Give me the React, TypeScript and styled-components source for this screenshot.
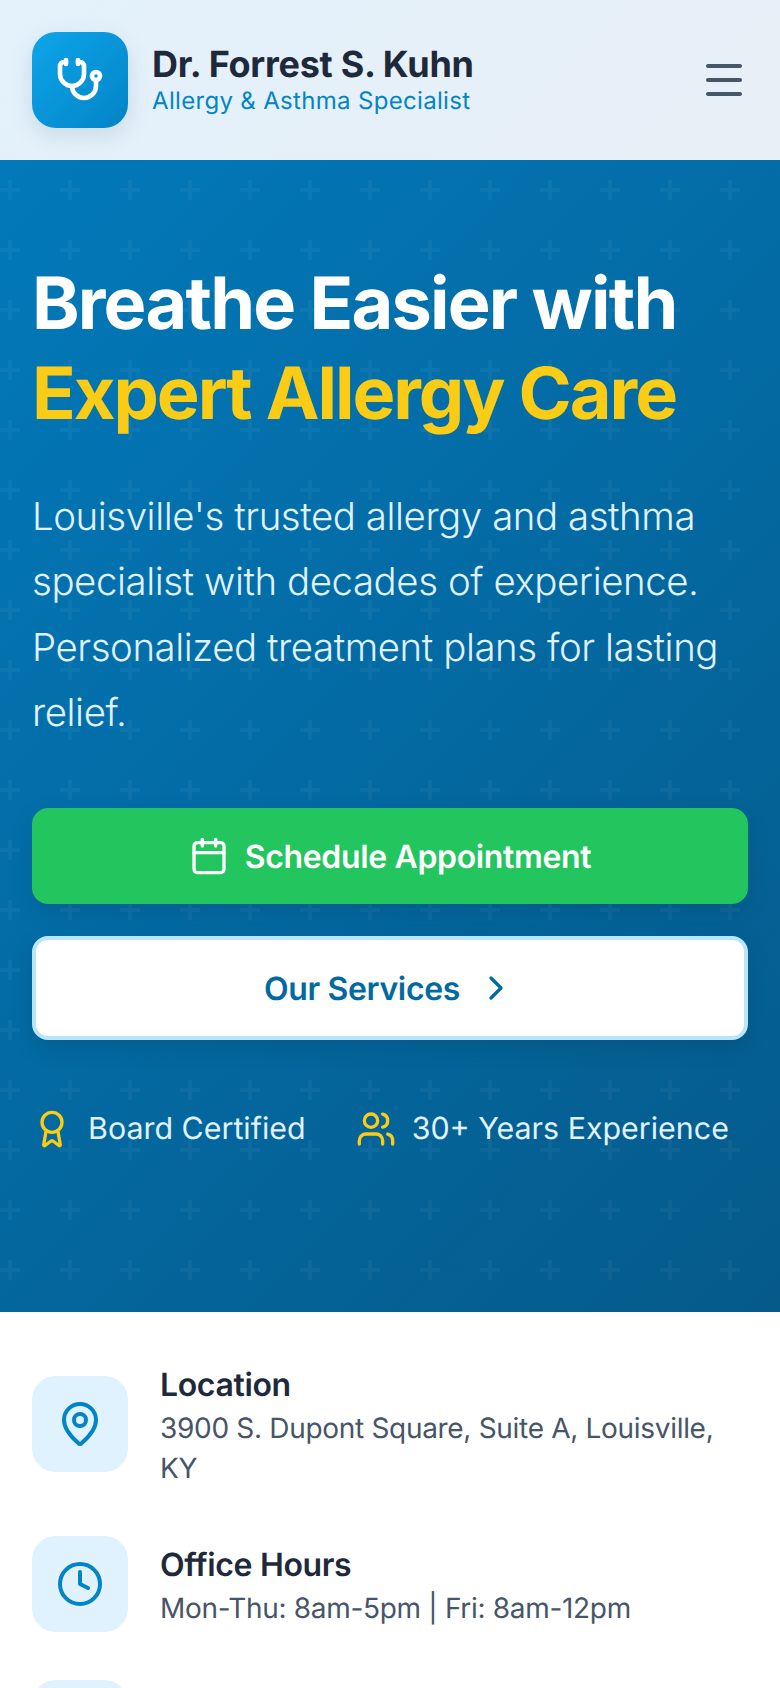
import React from "react";
import styled, { createGlobalStyle } from "styled-components";
import { Award, Calendar, ChevronRight, Clock, MapPin, Phone, Stethoscope, Users } from "lucide-react";

const Global = createGlobalStyle`
  html, body { margin: 0; padding: 0; background: #fff; }
  * { box-sizing: border-box; letter-spacing: -0.011em; }
  body { font-family: Inter, "Noto Sans", sans-serif; text-rendering: geometricPrecision; }
`;

const Page = styled.div`
  width: 780px;
  height: 1688px;
  overflow: hidden;
  background: #fff;
`;

const Header = styled.header`
  height: 160px;
  padding: 0 32px;
  display: flex;
  align-items: center;
  justify-content: space-between;
  background: linear-gradient(135deg, #e3f2fb 0%, #e8eff7 100%);
`;

const Brand = styled.div`
  display: flex;
  align-items: center;
  gap: 24px;
`;

const Logo = styled.div`
  width: 96px;
  height: 96px;
  border-radius: 24px;
  display: flex;
  align-items: center;
  justify-content: center;
  color: #fff;
  background: linear-gradient(135deg, #0ea5e9 0%, #0284c7 100%);
  box-shadow: 0 8px 24px rgba(2, 60, 100, 0.12);
`;

const BrandText = styled.div`
  display: flex;
  flex-direction: column;
`;

const Name = styled.div`
  font-size: 36px;
  line-height: 42px;
  font-weight: 700;
  letter-spacing: -0.28px;
  color: #1e293b;
`;

const Tagline = styled.div`
  font-size: 24px;
  line-height: 32px;
  font-weight: 400;
  letter-spacing: 0.32px;
  color: #0284c7;
`;

const MenuButton = styled.div`
  width: 36px;
  margin-right: 6px;
  display: flex;
  flex-direction: column;
  gap: 10px;
`;

const MenuBar = styled.span`
  display: block;
  height: 4px;
  border-radius: 2px;
  background: #475569;
`;

const plusTile = encodeURIComponent(
  '<svg xmlns="http://www.w3.org/2000/svg" width="60" height="60"><path fill="#fff" fill-opacity="0.04" d="M8 20h4v8h8v4h-8v8H8v-8H0v-4h8z"/></svg>'
);

const Hero = styled.section`
  padding: 99px 32px 159px;
  color: #fff;
  background-color: #0369a1;
  background-image:
    url("data:image/svg+xml,${plusTile}"),
    linear-gradient(135deg, #0279ba 0%, #055a8a 100%);
  background-size: 60px 60px, 100% 100%;
`;

const Title = styled.h1`
  margin: 0;
  font-size: 72px;
  line-height: 90px;
  font-weight: 700;
  letter-spacing: -0.025em;
`;

const Accent = styled.span`
  display: block;
  color: #facc15;
  letter-spacing: -2.03px;
`;

const Lead = styled.p`
  margin: 46px 0 0;
  font-size: 38.4px;
  line-height: 65.28px;
  font-weight: 300;
  color: #e0f2fe;
`;

const Actions = styled.div`
  margin-top: 62px;
  display: flex;
  flex-direction: column;
  gap: 32px;
`;

const ActionBase = styled.div`
  border-radius: 16px;
  display: flex;
  align-items: center;
  justify-content: center;
  gap: 16px;
  font-size: 32px;
  font-weight: 600;
  box-shadow: 0 8px 24px rgba(0, 0, 0, 0.1);
`;

const PrimaryButton = styled(ActionBase)`
  height: 96px;
  background: #22c55e;
  color: #fff;
`;

const SecondaryButton = styled(ActionBase)`
  height: 104px;
  border: 4px solid #bae6fd;
  background: #fff;
  color: #0369a1;
`;

const Badges = styled.div`
  margin-top: 65px;
  display: flex;
  gap: 50px;
`;

const Badge = styled.div`
  display: flex;
  align-items: center;
  gap: 16px;
  font-size: 30.4px;
  line-height: 48px;
  letter-spacing: 0;
  white-space: nowrap;
  color: #e0f2fe;
  svg { color: #facc15; flex: none; }
`;

const Info = styled.section`
  padding: 48px 32px 0;
  display: flex;
  flex-direction: column;
  gap: 48px;
`;

const InfoRow = styled.div`
  display: flex;
  align-items: center;
  gap: 32px;
`;

const InfoIcon = styled.div`
  width: 96px;
  height: 96px;
  flex: none;
  border-radius: 24px;
  display: flex;
  align-items: center;
  justify-content: center;
  background: #e0f2fe;
  color: #0284c7;
`;

const InfoText = styled.div`
  display: flex;
  flex-direction: column;
`;

const InfoTitle = styled.div`
  font-size: 32px;
  line-height: 50px;
  margin-bottom: -2px;
  font-weight: 600;
  color: #1e293b;
`;

const InfoDetail = styled.div`
  font-size: 28px;
  line-height: 40px;
  color: #475569;
`;

export default function App() {
  return (
    <Page>
      <Global />
      <Header>
        <Brand>
          <Logo><Stethoscope size={48} strokeWidth={2.3} /></Logo>
          <BrandText>
            <Name>Dr. Forrest S. Kuhn</Name>
            <Tagline>Allergy &amp; Asthma Specialist</Tagline>
          </BrandText>
        </Brand>
        <MenuButton>
          <MenuBar />
          <MenuBar />
          <MenuBar />
        </MenuButton>
      </Header>
      <Hero>
        <Title>
          Breathe Easier with
          <Accent>Expert Allergy Care</Accent>
        </Title>
        <Lead>
          Louisville's trusted allergy and asthma specialist with decades of experience. Personalized treatment plans for lasting relief.
        </Lead>
        <Actions>
          <PrimaryButton><Calendar size={40} />Schedule Appointment</PrimaryButton>
          <SecondaryButton>Our Services<ChevronRight size={40} /></SecondaryButton>
        </Actions>
        <Badges>
          <Badge><Award size={40} />Board Certified</Badge>
          <Badge><Users size={40} />30+ Years Experience</Badge>
        </Badges>
      </Hero>
      <Info>
        <InfoRow>
          <InfoIcon><MapPin size={48} /></InfoIcon>
          <InfoText>
            <InfoTitle>Location</InfoTitle>
            <InfoDetail>3900 S. Dupont Square, Suite A, Louisville, KY</InfoDetail>
          </InfoText>
        </InfoRow>
        <InfoRow>
          <InfoIcon><Clock size={48} /></InfoIcon>
          <InfoText>
            <InfoTitle>Office Hours</InfoTitle>
            <InfoDetail>Mon-Thu: 8am-5pm | Fri: 8am-12pm</InfoDetail>
          </InfoText>
        </InfoRow>
        <InfoRow>
          <InfoIcon><Phone size={48} /></InfoIcon>
        </InfoRow>
      </Info>
    </Page>
  );
}
